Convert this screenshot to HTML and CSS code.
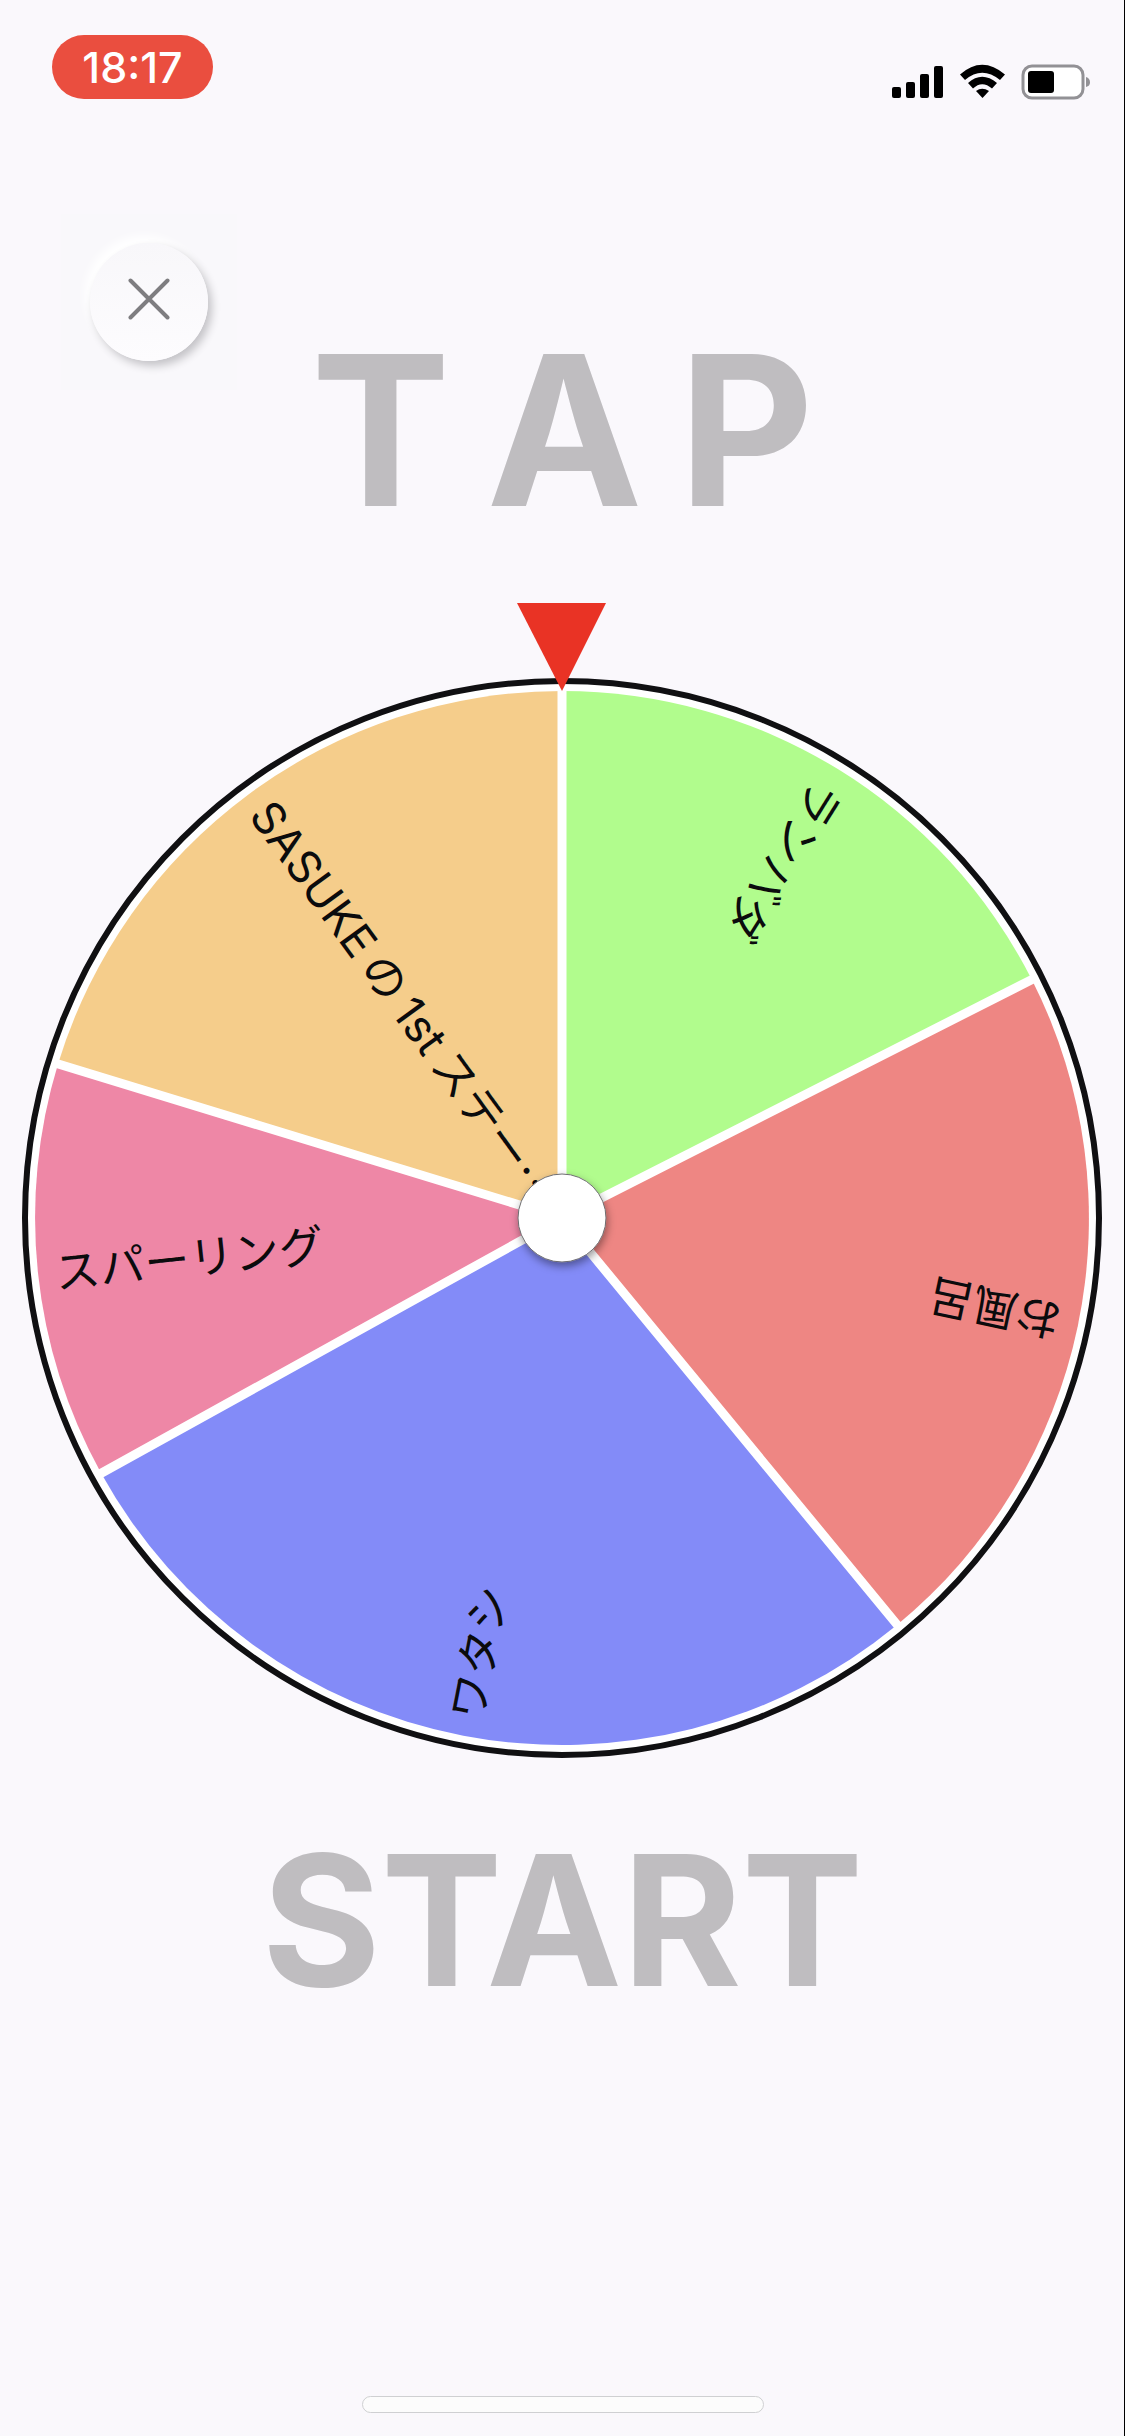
FILE: index.html
```html
<!DOCTYPE html>
<html lang="ja">
<head>
<meta charset="utf-8">
<meta name="viewport" content="width=device-width, initial-scale=1">
<title>ルーレット</title>
<link rel="stylesheet" href="styles.css">
</head>
<body>
<div class="status-bar">
  <time class="clock">18:17</time>
  <svg class="status-icons" width="200" height="36" viewBox="0 0 200 36" role="img" aria-label="電波、Wi-Fi、バッテリー">
    <rect x="0" y="23" width="9" height="11" rx="2"/>
    <rect x="14" y="18" width="9" height="16" rx="2"/>
    <rect x="28" y="10" width="9" height="24" rx="2"/>
    <rect x="42" y="2" width="9" height="32" rx="2"/>
    <path d="M68 10.500 Q90 -9 113 10.500 L108 16 Q90 1.500 73 16Z"/>
    <path d="M76 19 Q90 6.500 105 19 L100 24.500 Q90 16 81 24.500Z"/>
    <path d="M84 27 Q90 22.500 97 27 L90.500 34Z"/>
    <rect class="battery-case" x="131" y="2" width="60" height="32" rx="9"/>
    <rect x="136" y="7" width="26" height="22" rx="3"/>
    <path class="battery-cap" d="M194 13 Q198 14 198 18.500 Q198 22 194 23Z"/>
  </svg>
</div>
<main>
  <header class="hero">
    <div class="close-area">
      <button class="close" type="button" aria-label="閉じる">
        <svg width="42" height="42" viewBox="0 0 42 42" aria-hidden="true"><path d="M2.500 2.500 L39.500 39.500 M39.500 2.500 L2.500 39.500"/></svg>
      </button>
    </div>
    <p class="tap"><span>T</span> <span>A</span> <span>P</span></p>
  </header>
  <svg class="wheel" viewBox="0 0 1125 1160">
    <defs>
      <filter id="hub-shadow" x="-30%" y="-30%" width="160%" height="160%">
        <feDropShadow dx="1" dy="4" stdDeviation="4" flood-opacity="0.4"/>
      </filter>
    </defs>
    <g transform="translate(562 616)">
      <circle class="rim" r="537"/>
      <g class="slices">
        <path fill="#b1fc8d" d="M0 0 L0 -527 A527 527 0 0 1 470 -238Z"/>
        <path fill="#ee8683" d="M0 0 L470 -238 A527 527 0 0 1 335 407Z"/>
        <path fill="#838bf8" d="M0 0 L335 407 A527 527 0 0 1 -461 255Z"/>
        <path fill="#ee87a6" d="M0 0 L-461 255 A527 527 0 0 1 -504 -154Z"/>
        <path fill="#f5cd8b" d="M0 0 L-504 -154 A527 527 0 0 1 0 -527Z"/>
      </g>
      <path class="dividers" d="M0 0 V-530 M0 0 L473 -240 M0 0 L337 409 M0 0 L-464 257 M0 0 L-507 -155"/>
      <g class="labels">
        <text transform="rotate(122)" x="-510" y="18">ランバダ</text>
        <text transform="rotate(192)" x="-510" y="18">お風呂</text>
        <text transform="rotate(281)" x="-510" y="18">ワタシ</text>
        <text transform="rotate(-6)" x="-510" y="18">スパーリング</text>
        <text transform="rotate(54)" x="-510" y="18">SASUKE<tspan dx="9">の</tspan><tspan dx="9">1st</tspan><tspan class="kana" dx="9">ステー…</tspan></text>
      </g>
      <circle class="hub" r="44" filter="url(#hub-shadow)"/>
    </g>
    <path class="pointer" d="M517 1 H606 L562 89Z"/>
  </svg>
  <p class="start">START</p>
</main>
<div class="home-indicator"></div>
</body>
</html>
```
FILE: styles.css
```css
* {
  box-sizing: border-box;
}

body {
  margin: 0;
  min-height: 100vh;
  display: flex;
  flex-direction: column;
  padding-bottom: 23px;
  box-shadow: inset -1px 0 #000;
  background: #faf8fc;
  color: #0b0b0d;
  font-family: Inter, "Noto Sans CJK JP", sans-serif;
}

p {
  margin: 0;
}

.status-bar {
  display: flex;
  justify-content: space-between;
  align-items: flex-start;
  padding: 35px 33px 0 52px;
}

.clock {
  width: 161px;
  border-radius: 32px;
  background: #ea4e3f;
  color: #fff;
  font-size: 43px;
  font-weight: 500;
  line-height: 64px;
  text-align: center;
}

.status-icons {
  margin-top: 29px;
}

.battery-case {
  fill: #fff;
  stroke: #929195;
  stroke-width: 3;
}

.battery-cap {
  fill: #929195;
}

.hero {
  display: grid;
  height: 390px;
  margin-top: 112px;
}

.close-area,
.tap {
  grid-area: 1 / 1;
}

.close-area {
  display: grid;
  place-items: center;
  width: 176px;
  height: 176px;
  margin: 2px 0 0 61px;
  background: #f9f8fb;
}

.close {
  display: grid;
  place-items: center;
  width: 118px;
  height: 118px;
  padding: 0 0 6px;
  border: 0;
  border-radius: 50%;
  background: linear-gradient(#f8f7fa, #fdfcfe);
  box-shadow: 4px 5px 8px #c4c3c7, -5px -7px 10px #fff;
}

.close path {
  fill: none;
  stroke: #7e7d80;
  stroke-width: 4;
  stroke-linecap: round;
}

.tap,
.start {
  color: #bfbdc0;
  font-weight: 700;
  text-align: center;
}

.tap {
  display: flex;
  justify-content: center;
  gap: 36px;
  margin-top: 114px;
  font-size: 209px;
  line-height: 208px;
}

.wheel {
  display: block;
  width: 100%;
}

.rim {
  fill: #fff;
  stroke: #101012;
  stroke-width: 6;
}

.dividers {
  stroke: #fff;
  stroke-width: 9;
}

.labels {
  fill: #0b0b0d;
  font-size: 45px;
}

.kana {
  font-family: "Noto Sans CJK JP", sans-serif;
}

.hub {
  fill: #fff;
  stroke: #6e6d70;
  stroke-width: 1;
}

.pointer {
  fill: #e93325;
}

.start {
  margin-top: 66px;
  font-size: 182px;
  line-height: 184px;
}

.home-indicator {
  width: 402px;
  height: 17px;
  margin: auto auto 0;
  border: 1px solid #cfd0d2;
  border-radius: 9px;
  background: #fcfcfc;
}
```
